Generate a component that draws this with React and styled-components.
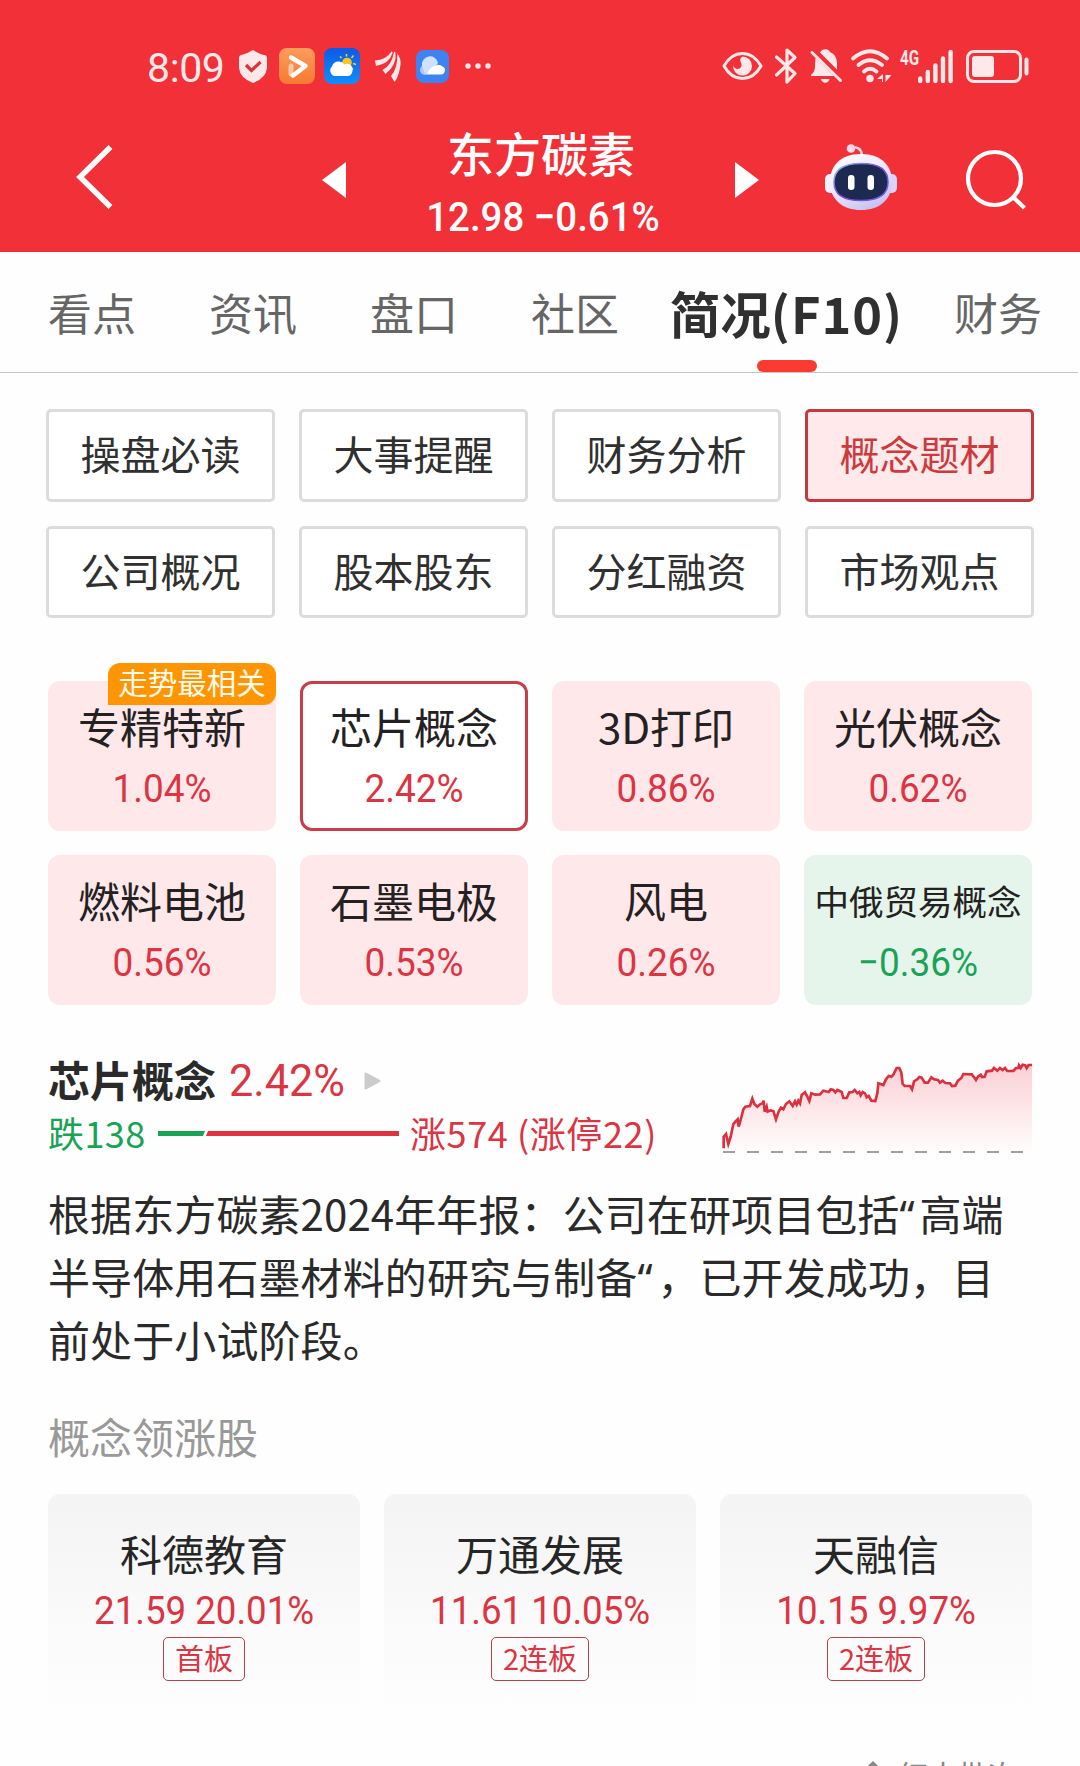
import React from "react";
import styled, { createGlobalStyle, css } from "styled-components";

const CJK = `"Noto Sans CJK SC", "Noto Sans", sans-serif`;
const NUM = `Roboto, "Noto Sans CJK SC", sans-serif`;
const RED = "#db3442";
const GREEN = "#1aa356";

const GlobalStyle = createGlobalStyle`
  * { box-sizing: border-box; }
  body {
    margin: 0;
    background: #fefefe;
    font-family: ${CJK};
    color: #2a2a2a;
  }
`;

const Screen = styled.main`
  width: 1080px;
  height: 1766px;
  overflow: hidden;
  display: flex;
  flex-direction: column;
  background: #fefefe;
`;

/* ---------- header ---------- */

const Header = styled.header`
  height: 252px;
  flex: none;
  background: #f23038;
  color: #fff;
`;

const StatusBar = styled.div`
  height: 132px;
  padding: 0 51px 0 147px;
  display: flex;
  align-items: center;
  justify-content: space-between;
  color: #ffe8ea;
`;

const StatusGroup = styled.div`
  display: flex;
  align-items: center;
`;

const Clock = styled.span`
  width: 78px;
  font: 400 41px/48px ${NUM};
  letter-spacing: -0.4px;
  padding-top: 3px;
`;

const Glyph = styled.svg`
  display: block;
  flex: none;
  width: ${(p) => p.$w}px;
  height: ${(p) => p.$h}px;
  margin-left: ${(p) => p.$ml || 0}px;
  margin-top: ${(p) => p.$mt || 0}px;
  overflow: visible;
`;

const NetworkLabel = styled.span`
  width: 19px;
  margin-left: 8px;
  margin-bottom: 17px;
  font: 700 20px/18px ${NUM};
  transform: scaleX(0.76);
  transform-origin: left center;
`;

const NavBar = styled.div`
  height: 120px;
  padding: 0 54px 0 76px;
  display: flex;
`;

const NavItem = styled.div`
  width: ${(p) => p.$w}px;
  margin-left: ${(p) => p.$ml || 0}px;
  padding-top: ${(p) => p.$pt}px;
`;

const StockTitle = styled.div`
  width: 300px;
  margin-left: 45px;
  text-align: center;
`;

const StockName = styled.div`
  font-size: 47px;
  line-height: 56px;
  font-weight: 500;
  margin-top: -8px;
`;

const StockQuote = styled.div`
  margin-top: 12px;
  font: 500 41.5px/50px ${NUM};
  transform: translateX(2px) scaleX(0.925);
`;

/* ---------- tabs ---------- */

const Tabs = styled.nav`
  height: 121px;
  flex: none;
  width: 1078px;
  padding-left: 48px;
  display: flex;
  gap: 73px;
  border-bottom: 1px solid #c6c6c6;
`;

const Tab = styled.div`
  flex: none;
  display: flex;
  flex-direction: column;
  align-items: center;
  justify-content: space-between;
  height: 120px;
  font-size: 44px;
  line-height: 64px;
  padding-top: 28px;
  color: #666;
  white-space: nowrap;
  ${(p) =>
    p.$active &&
    css`
      margin: 0 -22px;
      width: 233px;
      font-size: 50.5px;
      font-weight: 700;
      color: #303030;
    `}
`;

const TabSuffix = styled.span`
  letter-spacing: 1px;
`;

const TabMark = styled.i`
  width: 60px;
  height: 12px;
  border-radius: 6px;
  background: #fb3b32;
`;

/* ---------- section chips ---------- */

const ChipGrid = styled.div`
  flex: none;
  margin: 36px 46px 0;
  display: grid;
  grid-template-columns: repeat(4, 229px);
  grid-auto-rows: 92.5px;
  gap: 24px;
`;

const Chip = styled.div`
  display: flex;
  align-items: center;
  justify-content: center;
  padding-bottom: 4px;
  border: 3px solid ${(p) => (p.$active ? "#c23a40" : "#dcdcdc")};
  border-radius: 5px;
  background: ${(p) => (p.$active ? "#ffe9ea" : "#fff")};
  color: ${(p) => (p.$active ? "#cd3a3d" : "#303030")};
  font-size: 40px;
  line-height: 48px;
`;

/* ---------- concept cards ---------- */

const ConceptGrid = styled.div`
  flex: none;
  margin: 63px 48px 0;
  display: grid;
  grid-template-columns: repeat(4, 228px);
  grid-auto-rows: 150px;
  gap: 24px;
`;

const toneBackground = { up: "#ffe8ea", down: "#e5f5eb" };

const Concept = styled.div`
  position: relative;
  border-radius: 12px;
  padding-top: 23px;
  text-align: center;
  white-space: nowrap;
  background: ${(p) => toneBackground[p.$tone]};
  ${(p) =>
    p.$selected &&
    css`
      background: #fff;
      border: 3px solid #c93c4a;
      padding-top: 20px;
    `}
`;

const ConceptName = styled.div`
  font-size: ${(p) => (p.$long ? 34.5 : 42)}px;
  line-height: 44px;
  color: #242122;
`;

const ConceptChange = styled.div`
  font: 400 39.5px/48px ${NUM};
  transform: scaleX(0.935);
  margin-top: 17px;
  color: ${(p) => (p.$tone === "down" ? GREEN : RED)};
`;

const Ribbon = styled.span`
  position: absolute;
  right: 0;
  top: -18px;
  width: 168px;
  height: 42px;
  border-radius: 12px 12px 12px 0;
  background: #ff9503;
  color: #fffbe8;
  font-size: 29.5px;
  line-height: 36px;
  text-align: center;
`;

/* ---------- concept detail ---------- */

const Summary = styled.section`
  flex: none;
  height: 153px;
  margin: 0 48px;
  padding-top: 44px;
  display: flex;
  justify-content: space-between;
`;

const SummaryTitle = styled.div`
  display: flex;
  align-items: center;
  height: 60px;
  font-size: 42px;
  line-height: 60px;
  font-weight: 700;
`;

const SummaryChange = styled.span`
  margin: 4px 0 0 13px;
  width: 122px;
  font: 400 44.5px/56px ${NUM};
  transform: scaleX(0.97);
  transform-origin: left center;
  color: ${RED};
`;

const Breadth = styled.div`
  display: flex;
  align-items: center;
  height: 52px;
  margin-top: -3px;
  font-size: 36px;
  line-height: 52px;
`;

const Fallers = styled.span`
  width: 110px;
  color: ${GREEN};
  letter-spacing: 0.4px;
`;

const Risers = styled.span`
  margin-left: 11px;
  color: ${RED};
  letter-spacing: 0.6px;
`;

const Report = styled.p`
  flex: none;
  margin: 23px 48px 0;
  width: 970px;
  font-size: 42px;
  line-height: 63px;
  letter-spacing: 0.1px;
  color: #2a2a2a;
  white-space: nowrap;
`;

const Quote = styled.span`
  display: inline-block;
  width: 20px;
  font-family: "Noto Sans", sans-serif;
  line-height: 40px;
`;

const LeadersHeading = styled.h2`
  flex: none;
  margin: 36px 48px 0;
  font-size: 42px;
  line-height: 60px;
  font-weight: 400;
  color: #999;
`;

const Leaders = styled.div`
  flex: none;
  margin: 28px 48px 0;
  display: grid;
  grid-template-columns: repeat(3, 312px);
  gap: 24px;
`;

const Leader = styled.div`
  height: 216px;
  padding-top: 29px;
  display: flex;
  flex-direction: column;
  align-items: center;
  border-radius: 12px 12px 0 0;
  background: linear-gradient(#f4f4f4, #fefefe);
`;

const LeaderName = styled.div`
  font-size: 42px;
  line-height: 60px;
  color: #262626;
`;

const LeaderQuote = styled.div`
  font: 400 39px/48px ${NUM};
  transform: scaleX(0.94);
  margin-top: 4px;
  color: ${RED};
`;

const Streak = styled.span`
  height: 44px;
  margin-top: 2px;
  padding: 0 10.5px;
  border: 1px solid #b3434d;
  border-radius: 5px;
  font-size: 29px;
  line-height: 38px;
  color: ${RED};
`;

const Watermark = styled.div`
  flex: none;
  align-self: flex-end;
  width: 215px;
  height: 12px;
  margin-top: 44px;
  display: flex;
  align-items: flex-start;
  gap: 17px;
  font-size: 30px;
  line-height: 40px;
  color: #888;
`;

/* ---------- drawings ---------- */

const Shield = () => (
  <Glyph $w={28} $h={33} $ml={14} viewBox="0 0 28 33">
    <path d="M14 0 Q20 4 27 5.500 Q28 6 28 8 V18 Q27 28 14 33 Q1 28 0 18 V8 Q0 6 1 5.500 Q8 4 14 0Z" fill="#ffe8ea" />
    <path d="M7 15 L12.500 20.500 L21.500 12" fill="none" stroke="#d8343c" strokeWidth="3.200" />
  </Glyph>
);

const PlayerApp = () => (
  <Glyph $w={36} $h={36} $ml={12} viewBox="0 0 36 36">
    <defs>
      <linearGradient id="player" x1="0" y1="0" x2="0" y2="1">
        <stop offset="0" stopColor="#fb9d5c" />
        <stop offset="1" stopColor="#f77a31" />
      </linearGradient>
    </defs>
    <rect width="36" height="36" rx="8" fill="url(#player)" />
    <path d="M12 18 V26" stroke="#fcc7a4" strokeWidth="5" strokeLinecap="round" />
    <path d="M12 9.500 L26.500 18 L14 27.500" fill="none" stroke="#fff" strokeWidth="4.500" strokeLinecap="round" strokeLinejoin="round" />
  </Glyph>
);

const WeatherApp = () => (
  <Glyph $w={36} $h={36} $ml={9} viewBox="0 0 36 36">
    <defs>
      <linearGradient id="sky" x1="0" y1="0" x2="0" y2="1">
        <stop offset="0" stopColor="#0a5be6" />
        <stop offset="1" stopColor="#128dfb" />
      </linearGradient>
    </defs>
    <rect width="36" height="36" rx="8" fill="url(#sky)" />
    <circle cx="23" cy="14.500" r="4.800" fill="#f8c51e" />
    <path d="M22.500 8.500V6M27.500 10L29.500 7.500M29 15.500L32 16.500M17.500 10L16 8.500M27.500 20L29 21.500" stroke="#f6cf45" strokeWidth="1.500" />
    <path d="M12 28 A5.500 5.500 0 0 1 8 18.500 A7 7 0 0 1 20.500 16.500 A5.500 5.500 0 0 1 28.500 22 A5.500 5.500 0 0 1 24 28Z" fill="#fff" />
  </Glyph>
);

const Feather = () => (
  <Glyph $w={26} $h={31} $ml={15} viewBox="0 0 26 31" fill="#ffe8ea">
    <path d="M0 9.500 Q11 9 16.500 0.500 Q17.500 0 17.500 2 Q14 13 1 15Z" />
    <path d="M7.500 19 Q17 14 19 1 Q20 0 20.500 2 Q22 14 10.500 23Z" />
    <path d="M22.300 2.500 Q27 8 25 17 Q23 27 19.500 31 L16 25 Q23 17 22.300 2.500Z" />
  </Glyph>
);

const CloudApp = () => (
  <Glyph $w={33} $h={33} $ml={15} viewBox="0 0 33 33">
    <rect width="33" height="33" rx="8" fill="#3d84f2" />
    <circle cx="9" cy="20" r="5" fill="#a9c9fb" />
    <path d="M6 16 A8 8 0 0 1 22 13 Q18 18 14 24 H9Z" fill="#cfe1fd" />
    <path d="M11 24.500 Q13 17 19 16 A6 6 0 0 1 26.500 16.500 A4.200 4.200 0 0 1 25 24.500Z" fill="#fff" />
  </Glyph>
);

const More = () => (
  <Glyph $w={26} $h={6} $ml={16} viewBox="0 0 26 6" fill="#ffe8ea">
    <circle cx="3" cy="3" r="2.700" />
    <circle cx="13" cy="3" r="2.700" />
    <circle cx="23" cy="3" r="2.700" />
  </Glyph>
);

const Eye = () => (
  <Glyph $w={41} $h={28} viewBox="0 0 41 28">
    <path d="M2 14 Q9 1.500 20.500 1.500 Q32 1.500 39 14 Q32 26.500 20.500 26.500 Q9 26.500 2 14Z" fill="none" stroke="#ffe8ea" strokeWidth="3" strokeLinejoin="round" />
    <path d="M20.500 4.500 A9.500 9.500 0 1 1 11 13.500 Q13 18 17.500 16.500 Q21 14 18.500 9.500 Q17.500 6 20.500 4.500Z" fill="#ffe8ea" />
  </Glyph>
);

const Bluetooth = () => (
  <Glyph $w={22} $h={36} $ml={12} viewBox="0 0 22 36">
    <path d="M1.500 9 L20 25.500 L12 34 V2 L20 9.500 L1.500 27" fill="none" stroke="#ffe8ea" strokeWidth="3.200" strokeLinejoin="round" strokeLinecap="round" />
  </Glyph>
);

const MutedBell = () => (
  <Glyph $w={32} $h={34} $ml={13} viewBox="0 0 32 34">
    <path d="M10 3.500 Q12 0 16 0.300 Q19 0.500 20 3 Q27 6 27 14 V20.500Z" fill="#ffe8ea" />
    <path d="M5.500 9 L24 27 H1 Q0.500 25.500 3 24 Q5 22 5 16Z M11 30 H19.500 Q18.500 33.800 15.200 33.800 Q12 33.800 11 30Z" fill="#ffe8ea" />
    <path d="M2 3.500 L30.500 31.500" stroke="#ffe8ea" strokeWidth="3" strokeLinecap="round" />
  </Glyph>
);

const Wifi = () => (
  <Glyph $w={41} $h={34} $ml={9} viewBox="0 0 41 34">
    <g fill="none" stroke="#ffe8ea" strokeWidth="3.800" strokeLinecap="round">
      <path d="M2 9.500 Q19 -5 36 9.500" />
      <path d="M7.500 16 Q19 6.500 31 16" />
      <path d="M13 22.500 Q19 17 25.500 22.500" />
    </g>
    <circle cx="19" cy="29.500" r="3.700" fill="#ffe8ea" />
    <path d="M32 25 V33 L31 33 V30 H26Z M34.500 33 V26 H40.500Z" fill="#ffe8ea" />
  </Glyph>
);

const Signal = () => (
  <Glyph $w={35} $h={33} $ml={-1} viewBox="0 0 35 33">
    <path d="M2.200 28.500V31M9.800 22V31M17.400 15.500V31M25 8.500V31M32.600 2V31" stroke="#ffe8ea" strokeWidth="4.400" strokeLinecap="round" />
  </Glyph>
);

const Battery = () => (
  <Glyph $w={63} $h={33} $ml={13} viewBox="0 0 63 33">
    <rect x="1.500" y="1.500" width="53" height="30" rx="6.500" fill="none" stroke="#ffe8ea" strokeWidth="3" />
    <rect x="6" y="6" width="22" height="21" rx="3" fill="#ffe8ea" />
    <path d="M60.500 9.500V23.500" stroke="#ffe8ea" strokeWidth="4" strokeLinecap="round" />
  </Glyph>
);

const Robot = () => (
  <Glyph $w={72} $h={67} viewBox="0 0 72 67">
    <defs>
      <linearGradient id="shell" x1="0" y1="0" x2="0.600" y2="1">
        <stop offset="0" stopColor="#fff" />
        <stop offset="0.500" stopColor="#f0ebfb" />
        <stop offset="1" stopColor="#c9c3f3" />
      </linearGradient>
      <linearGradient id="rim" x1="0" y1="0" x2="1" y2="1">
        <stop offset="0" stopColor="#8fd8ee" />
        <stop offset="0.450" stopColor="#7a45c8" />
        <stop offset="1" stopColor="#6d62ea" />
      </linearGradient>
    </defs>
    <circle cx="26" cy="4.500" r="4.300" fill="#fbd9e6" />
    <path d="M26 3.500 Q36 2 37 11" fill="none" stroke="#f6cfe0" strokeWidth="2.500" />
    <rect x="0" y="30" width="12" height="19" rx="5" fill="#f3effc" />
    <rect x="60" y="30" width="12" height="19" rx="5" fill="#d6d3f8" />
    <path d="M36 10 C58 10 67 23 67 38 C67 56 54 66 36 66 C18 66 5 56 5 38 C5 23 14 10 36 10Z" fill="url(#shell)" />
    <path d="M36 19.500 C54 19.500 63 25 63 38 C63 51 54 56.500 36 56.500 C18 56.500 9 51 9 38 C9 25 18 19.500 36 19.500Z" fill="#1c2a52" stroke="url(#rim)" strokeWidth="1.500" />
    <rect x="23" y="31" width="6.500" height="15" rx="3.200" fill="#fff" />
    <rect x="42.500" y="31" width="6.500" height="15" rx="3.200" fill="#fff" />
  </Glyph>
);

const trend =
  "71,325 71,290 78,282 85,312 92,290 100,252 108,243 113,238 116,260 122,240 130,208 136,200 150,198 157,176 163,192 172,200 180,193 188,190 191,182 194,215 200,200 203,215 212,211 220,213 228,238 236,215 243,203 250,208 258,192 268,184 278,198 285,184 290,194 295,182 300,190 305,165 315,157 322,170 328,183 334,160 345,164 360,163 370,152 386,156 392,148 400,150 406,157 412,150 425,156 430,174 440,174 448,157 458,156 464,150 472,160 478,156 482,166 488,156 495,160 500,172 506,168 514,182 526,183 532,160 535,130 550,135 558,118 566,108 574,110 580,104 590,84 598,84 604,98 608,132 614,138 630,138 636,148 642,124 652,118 658,111 665,113 674,128 684,128 694,112 702,118 714,120 720,128 728,122 736,129 750,130 756,138 766,137 774,122 784,114 790,102 815,103 824,114 828,120 834,110 842,104 846,111 854,110 860,94 876,92 882,84 892,92 900,84 908,90 915,84 922,93 940,93 948,84 955,84 957,76 962,84 968,74 976,76 980,84 986,75 996,75";

const TrendChart = () => (
  <Glyph $w={309} $h={102} $mt={4} viewBox="69 39 927 306">
    <defs>
      <linearGradient id="area" gradientUnits="userSpaceOnUse" x1="0" y1="70" x2="0" y2="350">
        <stop offset="0" stopColor="#fbcfd3" />
        <stop offset="1" stopColor="#fff" />
      </linearGradient>
    </defs>
    <polygon points={`71,350 ${trend} 996,350`} fill="url(#area)" />
    <path d="M69 336H996" stroke="#a39d9f" strokeWidth="6" strokeDasharray="36 36" />
    <polyline points={trend} fill="none" stroke="#dc3040" strokeWidth="8" strokeLinejoin="miter" />
  </Glyph>
);

/* ---------- data ---------- */

const chips = ["操盘必读", "大事提醒", "财务分析", "概念题材", "公司概况", "股本股东", "分红融资", "市场观点"];

const concepts = [
  { name: "专精特新", change: "1.04%", ribbon: "走势最相关" },
  { name: "芯片概念", change: "2.42%", selected: true },
  { name: "3D打印", change: "0.86%" },
  { name: "光伏概念", change: "0.62%" },
  { name: "燃料电池", change: "0.56%" },
  { name: "石墨电极", change: "0.53%" },
  { name: "风电", change: "0.26%" },
  { name: "中俄贸易概念", change: "−0.36%", tone: "down" },
];

const leaders = [
  { name: "科德教育", quote: "21.59 20.01%", streak: "首板" },
  { name: "万通发展", quote: "11.61 10.05%", streak: "2连板" },
  { name: "天融信", quote: "10.15 9.97%", streak: "2连板" },
];

export default function App() {
  return (
    <Screen>
      <GlobalStyle />
      <Header>
        <StatusBar>
          <StatusGroup>
            <Clock>8:09</Clock>
            <Shield />
            <PlayerApp />
            <WeatherApp />
            <Feather />
            <CloudApp />
            <More />
          </StatusGroup>
          <StatusGroup>
            <Eye />
            <Bluetooth />
            <MutedBell />
            <Wifi />
            <NetworkLabel>4G</NetworkLabel>
            <Signal />
            <Battery />
          </StatusGroup>
        </StatusBar>
        <NavBar>
          <NavItem $w={37} $pt={13}>
            <Glyph $w={37} $h={64} viewBox="0 0 37 64">
              <path d="M34.500 2 L4 32 L34.500 62" fill="none" stroke="#fff" strokeWidth="5.500" />
            </Glyph>
          </NavItem>
          <NavItem $w={24} $ml={209} $pt={30}>
            <Glyph $w={24} $h={36} viewBox="0 0 24 36">
              <path d="M24 0V36L0 18Z" fill="#fff" />
            </Glyph>
          </NavItem>
          <StockTitle>
            <StockName>东方碳素</StockName>
            <StockQuote>12.98 −0.61%</StockQuote>
          </StockTitle>
          <NavItem $w={24} $ml={44} $pt={30}>
            <Glyph $w={24} $h={36} viewBox="0 0 24 36">
              <path d="M0 0V36L24 18Z" fill="#fff" />
            </Glyph>
          </NavItem>
          <NavItem $w={72} $ml={66} $pt={12}>
            <Robot />
          </NavItem>
          <NavItem $w={60} $ml={69} $pt={18}>
            <Glyph $w={60} $h={60} viewBox="0 0 60 60">
              <circle cx="28.500" cy="28.500" r="26.500" fill="none" stroke="#fff" strokeWidth="4.200" />
              <path d="M47.500 47.500 L58.500 58" stroke="#fff" strokeWidth="4.200" />
            </Glyph>
          </NavItem>
        </NavBar>
      </Header>

      <Tabs>
        <Tab>看点</Tab>
        <Tab>资讯</Tab>
        <Tab>盘口</Tab>
        <Tab>社区</Tab>
        <Tab $active>
          <span>
            简况<TabSuffix>(F10)</TabSuffix>
          </span>
          <TabMark />
        </Tab>
        <Tab>财务</Tab>
      </Tabs>

      <ChipGrid>
        {chips.map((c) => (
          <Chip key={c} $active={c === "概念题材"}>
            {c}
          </Chip>
        ))}
      </ChipGrid>

      <ConceptGrid>
        {concepts.map((c) => (
          <Concept key={c.name} $tone={c.tone || "up"} $selected={c.selected}>
            {c.ribbon && <Ribbon>{c.ribbon}</Ribbon>}
            <ConceptName $long={c.name.length > 5}>{c.name}</ConceptName>
            <ConceptChange $tone={c.tone}>{c.change}</ConceptChange>
          </Concept>
        ))}
      </ConceptGrid>

      <Summary>
        <div>
          <SummaryTitle>
            芯片概念
            <SummaryChange>2.42%</SummaryChange>
            <Glyph $w={17} $h={18} $ml={13} $mt={4} viewBox="0 0 17 18">
              <path d="M1.500 1.500V16.500L15.500 9Z" fill="#ccc" stroke="#ccc" strokeWidth="2" strokeLinejoin="round" />
            </Glyph>
          </SummaryTitle>
          <Breadth>
            <Fallers>跌138</Fallers>
            <Glyph $w={241} $h={5} $mt={2} viewBox="0 0 241 5">
              <path d="M0 0H47L45 5H0Z" fill={GREEN} />
              <path d="M50 0H241V5H48Z" fill="#e2323f" />
            </Glyph>
            <Risers>涨574 (涨停22)</Risers>
          </Breadth>
        </div>
        <TrendChart />
      </Summary>

      <Report>
        根据东方碳素2024年年报：公司在研项目包括<Quote>“</Quote>高端
        <br />
        半导体用石墨材料的研究与制备<Quote>“</Quote>，已开发成功，目
        <br />
        前处于小试阶段。
      </Report>

      <LeadersHeading>概念领涨股</LeadersHeading>
      <Leaders>
        {leaders.map((l) => (
          <Leader key={l.name}>
            <LeaderName>{l.name}</LeaderName>
            <LeaderQuote>{l.quote}</LeaderQuote>
            <Streak>{l.streak}</Streak>
          </Leader>
        ))}
      </Leaders>

      <Watermark>
        <Glyph $w={16} $h={14} $mt={8} viewBox="0 0 16 14">
          <path d="M0 9 L8 1.500 L16 9" fill="none" stroke="#888" strokeWidth="3.500" />
        </Glyph>
        <span>红古批次</span>
      </Watermark>
    </Screen>
  );
}
